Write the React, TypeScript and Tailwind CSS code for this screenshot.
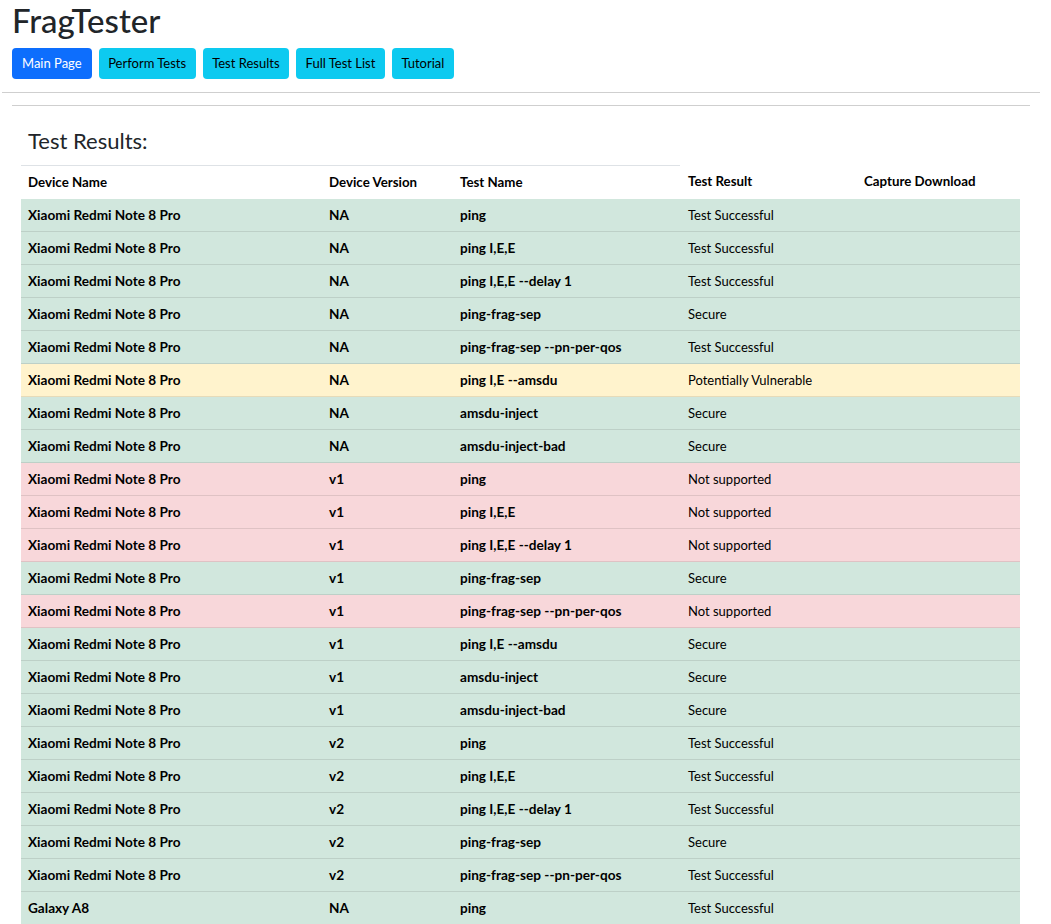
type Row = [string, string, string, string, 'ok' | 'warn' | 'bad']

const rows: Row[] = [
  ['Xiaomi Redmi Note 8 Pro', 'NA', 'ping', 'Test Successful', 'ok'],
  ['Xiaomi Redmi Note 8 Pro', 'NA', 'ping I,E,E', 'Test Successful', 'ok'],
  ['Xiaomi Redmi Note 8 Pro', 'NA', 'ping I,E,E --delay 1', 'Test Successful', 'ok'],
  ['Xiaomi Redmi Note 8 Pro', 'NA', 'ping-frag-sep', 'Secure', 'ok'],
  ['Xiaomi Redmi Note 8 Pro', 'NA', 'ping-frag-sep --pn-per-qos', 'Test Successful', 'ok'],
  ['Xiaomi Redmi Note 8 Pro', 'NA', 'ping I,E --amsdu', 'Potentially Vulnerable', 'warn'],
  ['Xiaomi Redmi Note 8 Pro', 'NA', 'amsdu-inject', 'Secure', 'ok'],
  ['Xiaomi Redmi Note 8 Pro', 'NA', 'amsdu-inject-bad', 'Secure', 'ok'],
  ['Xiaomi Redmi Note 8 Pro', 'v1', 'ping', 'Not supported', 'bad'],
  ['Xiaomi Redmi Note 8 Pro', 'v1', 'ping I,E,E', 'Not supported', 'bad'],
  ['Xiaomi Redmi Note 8 Pro', 'v1', 'ping I,E,E --delay 1', 'Not supported', 'bad'],
  ['Xiaomi Redmi Note 8 Pro', 'v1', 'ping-frag-sep', 'Secure', 'ok'],
  ['Xiaomi Redmi Note 8 Pro', 'v1', 'ping-frag-sep --pn-per-qos', 'Not supported', 'bad'],
  ['Xiaomi Redmi Note 8 Pro', 'v1', 'ping I,E --amsdu', 'Secure', 'ok'],
  ['Xiaomi Redmi Note 8 Pro', 'v1', 'amsdu-inject', 'Secure', 'ok'],
  ['Xiaomi Redmi Note 8 Pro', 'v1', 'amsdu-inject-bad', 'Secure', 'ok'],
  ['Xiaomi Redmi Note 8 Pro', 'v2', 'ping', 'Test Successful', 'ok'],
  ['Xiaomi Redmi Note 8 Pro', 'v2', 'ping I,E,E', 'Test Successful', 'ok'],
  ['Xiaomi Redmi Note 8 Pro', 'v2', 'ping I,E,E --delay 1', 'Test Successful', 'ok'],
  ['Xiaomi Redmi Note 8 Pro', 'v2', 'ping-frag-sep', 'Secure', 'ok'],
  ['Xiaomi Redmi Note 8 Pro', 'v2', 'ping-frag-sep --pn-per-qos', 'Test Successful', 'ok'],
  ['Galaxy A8', 'NA', 'ping', 'Test Successful', 'ok'],
]

const rowColor = {
  ok: 'bg-[#d1e7dd] border-[#bdd0c7]',
  warn: 'bg-[#fff3cd] border-[#e6dbb9]',
  bad: 'bg-[#f8d7da] border-[#dfc2c4]',
}

const navButtons = ['Perform Tests', 'Test Results', 'Full Test List', 'Tutorial']

export default function App() {
  return (
    <div className="min-h-screen bg-white font-['Lato','Liberation_Sans',sans-serif] text-[#212529]">
      <div className="px-3 pt-[1px]">
        <h1 className="text-[33px] leading-[38px] font-medium">FragTester</h1>
        <div className="mt-[9px] flex gap-[7px]">
          <button className="h-[31px] rounded-[4px] bg-[#0d6efd] px-[10px] pt-[1px] text-[13px] text-white">
            Main Page
          </button>
          {navButtons.map((b) => (
            <button
              key={b}
              className="h-[31px] rounded-[4px] bg-[#0dcaf0] px-[9.5px] pt-[1px] text-[13px] text-black"
            >
              {b}
            </button>
          ))}
        </div>
      </div>
      <hr className="ml-[2px] mt-[13px] w-[1038px] border-t border-[#cfcfcf]" />
      <hr className="ml-[12px] mt-[12px] w-[1018px] border-t border-[#cfcfcf]" />

      <div className="ml-[21px] w-[999px]">
        <h2 className="pl-[7px] pt-[21px] text-[22px] leading-[28px]">Test Results:</h2>
        <table className="mt-[10px] w-[999px] table-fixed border-collapse text-[13px] text-black">
          <colgroup>
            <col className="w-[300px]" />
            <col className="w-[131px]" />
            <col className="w-[228px]" />
            <col className="w-[176px]" />
            <col className="w-[164px]" />
          </colgroup>
          <thead>
            <tr className="h-[33px] text-[13.3px] font-bold">
              <th className="border-t border-[#dee2e6] px-[7px] pt-[1px] text-left">Device Name</th>
              <th className="border-t border-[#dee2e6] px-[8px] pt-[1px] text-left">Device Version</th>
              <th className="border-t border-[#dee2e6] px-[8px] pt-[1px] text-left">Test Name</th>
              <th className="px-[8px] pb-[1px] text-left">Test Result</th>
              <th className="px-[8px] pb-[1px] text-left">Capture Download</th>
            </tr>
          </thead>
          <tbody>
            {rows.map((r, i) => (
              <tr key={i} className={`h-[33px] border-b ${rowColor[r[4]]}`}>
                <td className="px-[7px] pt-[1px] text-[13.6px] font-bold">{r[0]}</td>
                <td className="px-[8px] pt-[1px] text-[13.6px] font-bold">{r[1]}</td>
                <td className="px-[8px] pt-[1px] text-[13.6px] font-bold">{r[2]}</td>
                <td className="px-[8px] pt-[1px]">{r[3]}</td>
                <td className="px-[8px]"></td>
              </tr>
            ))}
          </tbody>
        </table>
      </div>
    </div>
  )
}
